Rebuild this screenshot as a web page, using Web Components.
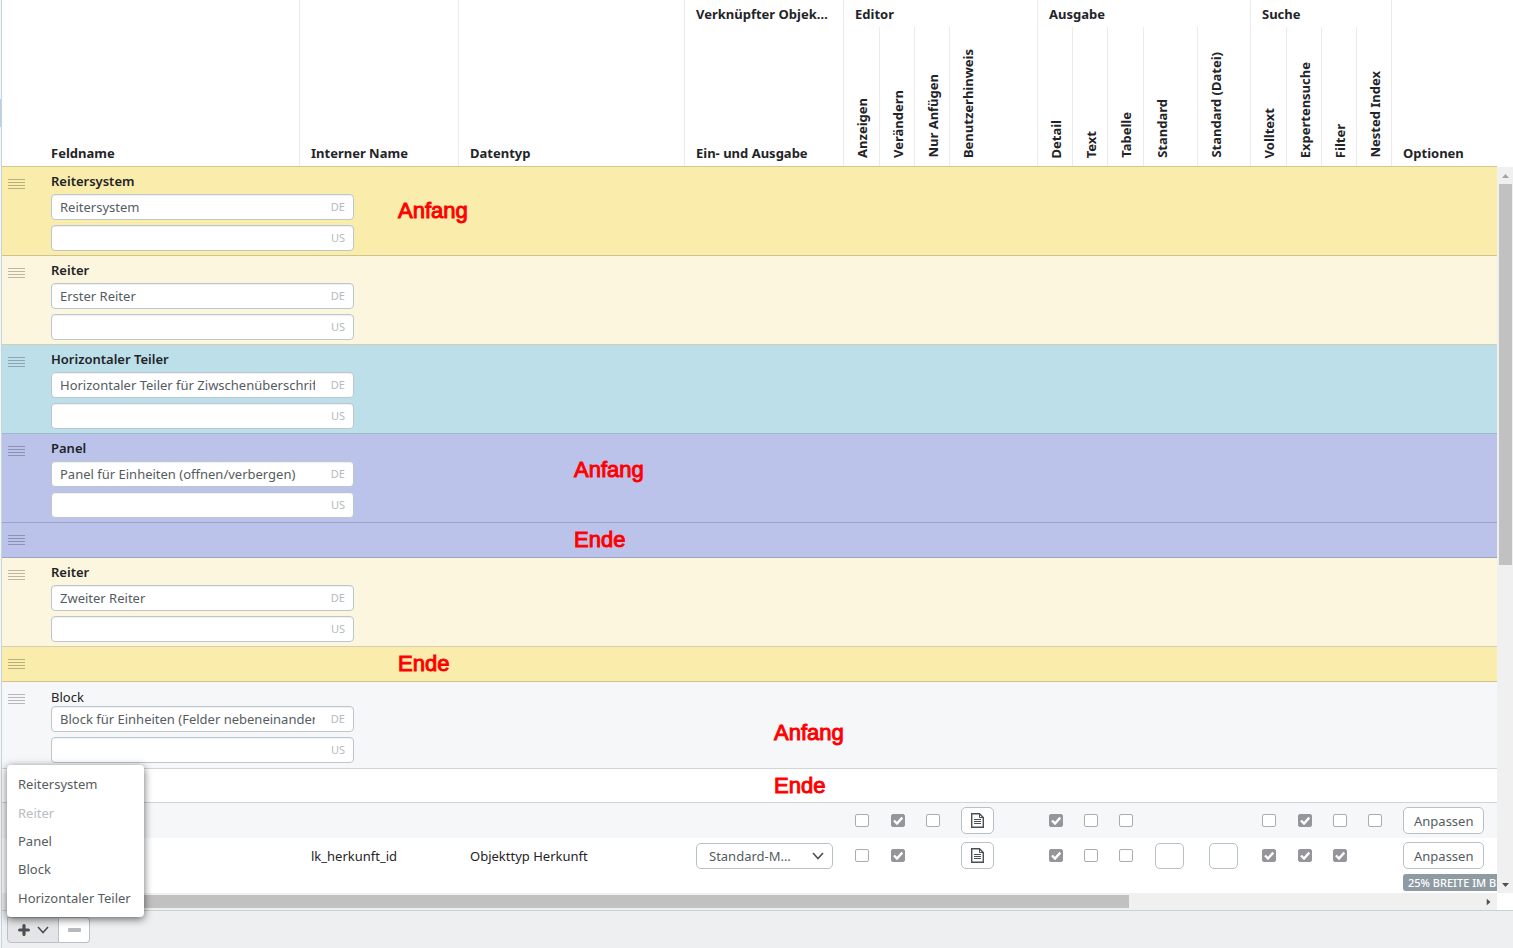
<!DOCTYPE html>
<html lang="de">
<head>
<meta charset="utf-8">
<title>Maskeneditor</title>
<style>
  body { margin: 0; background: #fff; color: #1f2428; font: 13px/20px "Noto Sans", "Open Sans", sans-serif; }
</style>
</head>
<body>
<mask-editor>
  <mask-table slot="table"></mask-table>
  <tool-bar slot="tools"></tool-bar>
</mask-editor>

<script>
const define = (name, html, setup) => {
  const template = document.createElement('template');
  template.innerHTML = html;
  customElements.define(name, class extends HTMLElement {
    constructor() {
      super();
      this.attachShadow({ mode: 'open' }).append(template.content.cloneNode(true));
    }
    connectedCallback() {
      if (setup && !this.ready) { this.ready = true; setup(this, this.shadowRoot); }
    }
  });
};

define('drag-handle', `
  <style>
    :host { display: block; width: 17px; height: 10px; color: #000; opacity: .25; }
    svg { display: block; }
  </style>
  <svg width="17" height="10" fill="currentColor" aria-hidden="true">
    <path d="M0 0h17v1H0zM0 3h17v1H0zM0 6h17v1H0zM0 9h17v1H0z"/>
  </svg>`);

/* Label with one text box for each language */
define('name-fields', `
  <style>
    :host { display: flex; flex-direction: column; color: #1f2428; }
    .title { font-weight: 600; line-height: 20px; margin-bottom: 3px; }
    :host([plain]) .title { font-weight: 400; line-height: 18px; margin-bottom: 0; }
    .field { display: flex; align-items: center; gap: 16px; box-sizing: border-box; height: 26px; padding: 0 8px;
      background: #fff; border: 1px solid #bcc6cd; border-radius: 4px; box-shadow: inset 0 1px 1px #eef1f3; }
    .field + .field { margin-top: 5px; }
    input { flex: 1; min-width: 0; border: 0; padding: 0; outline: 0; background: none; font: inherit; color: #555c61; }
    .lang { font-size: 11px; color: #b4babe; }
  </style>
  <label class="title" for="de"></label>
  <div class="field"><input id="de" type="text"><label class="lang" for="de">DE</label></div>
  <div class="field"><input id="us" type="text"><label class="lang" for="us">US</label></div>`,
  (el, root) => {
    root.querySelector('.title').textContent = el.getAttribute('label');
    root.querySelector('#de').value = el.getAttribute('value');
  });

define('tick-box', `
  <style>
    :host { display: block; height: 13px; }
    input { appearance: none; display: block; box-sizing: border-box; width: 14px; height: 13px; margin: 0;
      border: 1px solid #a9adb1; border-radius: 2px; background: #fff; }
    input:checked { border-color: #95959b; background: #95959b url("data:image/svg+xml,%3Csvg xmlns='http://www.w3.org/2000/svg' viewBox='0 0 12 11'%3E%3Cpath d='M2 5.5l3 3L10.3 2.6' fill='none' stroke='white' stroke-width='2.4'/%3E%3C/svg%3E") center / 12px 11px no-repeat; }
  </style>
  <input type="checkbox">`,
  (el, root) => {
    const box = root.querySelector('input');
    box.checked = el.hasAttribute('checked');
    box.setAttribute('aria-label', el.getAttribute('label'));
  });

define('push-button', `
  <style>
    :host { display: block; }
    button { display: flex; align-items: center; justify-content: center; box-sizing: border-box; height: 27px; padding: 0 10px;
      border: 1px solid #b7c0c6; border-radius: 5px; background: #fff; color: #555c61; font: inherit; }
    :host([label]) button { padding: 0 9px; }
  </style>
  <button type="button"><slot></slot></button>`,
  (el, root) => {
    if (el.hasAttribute('label')) root.querySelector('button').setAttribute('aria-label', el.getAttribute('label'));
  });

define('doc-icon', `
  <style>:host { display: block; } svg { display: block; }</style>
  <svg width="13" height="15" viewBox="0 0 13 15" fill="none" stroke="#4a5055" aria-hidden="true">
    <path d="M.7.7h7.800l3.800 3.800v9.800H.7z" stroke-width="1.4"/><path d="M8.5.5v4h4"/><path d="M3 6.500h7M3 8.500h7M3 10.500h7"/>
  </svg>`);

define('mask-select', `
  <style>
    :host { display: grid; align-items: center; }
    select { grid-area: 1 / 1; appearance: none; box-sizing: border-box; width: 100%; height: 26px; padding: 0 30px 0 12px;
      border: 1px solid #b7c0c6; border-radius: 5px; background: #fff; color: #555c61; font: inherit; }
    svg { grid-area: 1 / 1; justify-self: end; margin-right: 9px; pointer-events: none; }
  </style>
  <select aria-label="Ein- und Ausgabe"><option>Standard-M…</option></select>
  <svg width="12" height="8" fill="none" stroke="#4a5055" stroke-width="1.6" aria-hidden="true"><path d="M1 1l5 5.5L11 1"/></svg>`);

define('number-box', `
  <style>
    :host { display: block; }
    input { display: block; box-sizing: border-box; width: 29px; height: 26px; padding: 0 4px; border: 1px solid #b7c0c6; border-radius: 5px; font: inherit; }
  </style>
  <input type="text">`,
  (el, root) => root.querySelector('input').setAttribute('aria-label', el.getAttribute('label')));

define('scroll-bar', `
  <style>
    :host { display: grid; grid-template-rows: 17px 55fr 45fr 17px; background: #f0f0f0; padding: 0 1px 0 2px; }
    :host([horizontal]) { grid-template: none / 17px 76fr 24fr 17px; padding: 2px 0; }
    i { display: grid; place-items: center; }
    .thumb { background: #c1c1c1; }
    svg { fill: #505050; }
    .first svg { fill: #a3a3a3; }
    :host([horizontal]) svg { transform: rotate(-90deg); }
    .first svg { transform: rotate(180deg); }
    :host([horizontal]) .first svg { transform: rotate(90deg); }
  </style>
  <i class="first"><svg width="7" height="4"><path d="M0 0h7L3.500 4z"/></svg></i>
  <i class="thumb"></i><i></i>
  <i><svg width="7" height="4"><path d="M0 0h7L3.500 4z"/></svg></i>`);

const section = (kind, label, value, note = '', level = '') => `
  <tr class="section ${kind} ${label ? '' : 'end'}">
    <td class="grip"><drag-handle></drag-handle></td>
    <td>${label ? `<name-fields ${kind === 'block' ? 'plain' : ''} label="${label}" value="${value}"></name-fields>` : ''}</td>
    <td class="note ${level}">${note}</td>
  </tr>`;
const names = ['Anzeigen', 'Verändern', 'Nur Anfügen', 'Benutzerhinweis', 'Detail', 'Text', 'Tabelle', 'Standard',
  'Standard (Datei)', 'Volltext', 'Expertensuche', 'Filter', 'Nested Index'];
/* One character for each option column: 0 open, 1 ticked, d document, n number, - nothing */
const options = (codes) => [...codes].map((c, i) => '<td>' + ({
  0: `<tick-box label="${names[i]}"></tick-box>`,
  1: `<tick-box checked label="${names[i]}"></tick-box>`,
  d: `<push-button label="${names[i]}"><doc-icon></doc-icon></push-button>`,
  n: `<number-box label="${names[i]}"></number-box>`
}[c] || '') + '</td>').join('');

define('mask-table', `
  <style>
    :host { display: block; overflow: hidden;
      --columns: minmax(240px, 1fr) 159px 226px 159px 36px 35px 35px 88px 35px 35px 36px 54px 53px 36px 35px 35px 35px 105px; }
    table, tbody { display: block; }
    thead { display: grid; grid-template-columns: var(--columns); grid-template-rows: 27px 139px; border-bottom: 1px solid #cfc890; }
    thead tr { display: contents; }
    th { grid-row: 1; display: flex; align-items: flex-end; box-sizing: border-box; min-width: 0; padding: 0 0 3px 11px; border-right: 1px solid #ebebeb;
      font-weight: 700; text-align: left; white-space: nowrap; }
    .tall { grid-row: 1 / 3; }
    .tall:first-child { padding-left: 49px; }
    .editor { grid-column: 5 / 9; }
    .output { grid-column: 9 / 14; }
    .search { grid-column: 14 / 18; }
    .last { grid-column: 18; border: 0; }
    .io { grid-area: 2 / 4; }
    .turn { grid-row: 2; padding: 0 0 8px 8px; }
    .turn span { writing-mode: vertical-rl; transform: rotate(180deg); line-height: 20px; }

    td { padding: 0; }
    .section { display: grid; grid-template-columns: 49px 303px 1fr; box-sizing: border-box; height: 89px; padding-top: 4px;
      border-bottom: 1px solid var(--line); background: var(--fill); }
    .end { height: 35px; }
    .grip { padding: 8px 0 0 6px; }
    .system { --fill: #faecab; --line: #cfc48c; }
    .tab { --fill: #fdf6de; --line: #d3cfb4; }
    .divider { --fill: #bcdfea; --line: #9dbcc9; }
    .panel { --fill: #bbc3eb; --line: #9ba3c6; }
    .block { --fill: #f5f7f9; --line: #d0d4d6; }
    .block:not(.end) { height: 87px; padding-top: 6px; }
    .block .grip { padding-top: 6px; }
    .block.end { --fill: #fff; height: 34px; }
    .note { align-self: center; padding: 0 0 4px 44px; color: #f00; font: 22px/24px "Liberation Sans", Arial, sans-serif; -webkit-text-stroke: 1px #f00; }
    .inner { padding-left: 220px; }
    .deep { padding-left: 420px; }
    .panel:not(.end) .note { padding-bottom: 20px; }
    .block:not(.end) .note { padding: 10px 0 0 420px; }

    .data { display: grid; grid-template-columns: var(--columns); height: 35px; background: #fff; }
    .data.alt { background: #f5f7f9; }
    .data td { display: flex; flex-direction: column; align-items: flex-start; box-sizing: border-box; min-width: 0; padding: 4px 0 0 11px; }
    .data td.grip { padding: 12px 0 0 6px; }
    .data td:has(tick-box) { padding-top: 11px; }
    .data.full { height: 71px; }
    .data.full td.text { padding-top: 8px; }
    .data.full td:has(number-box), .data.full td:has(mask-select) { padding-top: 5px; }
    mask-select { width: 137px; }
    .badge { margin-top: 5px; padding: 0 5px; border-radius: 3px; background: #8e9ba2; color: #fff; font-size: 11px; font-weight: 500; line-height: 17px; white-space: nowrap; }
  </style>
  <table>
    <thead>
      <tr>
        <th class="tall">Feldname</th><th class="tall">Interner Name</th><th class="tall">Datentyp</th>
        <th>Verknüpfter Objek…</th><th class="editor">Editor</th><th class="output">Ausgabe</th><th class="search">Suche</th>
        <th class="tall last">Optionen</th>
      </tr>
      <tr><th class="io">Ein- und Ausgabe</th>${names.map(n => `<th class="turn"><span>${n}</span></th>`).join('')}</tr>
    </thead>
    <tbody>
      ${section('system', 'Reitersystem', 'Reitersystem', 'Anfang')}
      ${section('tab', 'Reiter', 'Erster Reiter')}
      ${section('divider', 'Horizontaler Teiler', 'Horizontaler Teiler für Ziwschenüberschriften')}
      ${section('panel', 'Panel', 'Panel für Einheiten (offnen/verbergen)', 'Anfang', 'inner')}
      ${section('panel', '', '', 'Ende', 'inner')}
      ${section('tab', 'Reiter', 'Zweiter Reiter')}
      ${section('system', '', '', 'Ende')}
      ${section('block', 'Block', 'Block für Einheiten (Felder nebeneinander)', 'Anfang', 'deep')}
      ${section('block', '', '', 'Ende', 'deep')}
      <tr class="data alt">
        <td class="grip"><drag-handle></drag-handle></td><td></td><td></td><td></td>${options('010d100--0100')}
        <td><push-button>Anpassen</push-button></td>
      </tr>
      <tr class="data full">
        <td class="grip"><drag-handle></drag-handle></td><td class="text">lk_herkunft_id</td><td class="text">Objekttyp Herkunft</td>
        <td><mask-select></mask-select></td>${options('01-d100nn111-')}
        <td><push-button>Anpassen</push-button><span class="badge">25% BREITE IM BLOCK</span></td>
      </tr>
    </tbody>
  </table>`);

define('tool-bar', `
  <style>
    :host { display: flex; padding: 6px 5px 5px; border-top: 1px solid #c9d2d7; background: #edeff1; }
    .anchor { position: relative; }
    button { font: inherit; color: #4a5055; }
    .tool { display: flex; align-items: center; justify-content: center; box-sizing: border-box; height: 26px; border: 1px solid #b7c0c6; background: #fff; }
    .add { gap: 7px; width: 52px; border-radius: 0 0 0 4px; background: #e3e5e7; }
    .remove { width: 31px; border-left: 0; border-radius: 0 4px 4px 0; }
    .menu { position: absolute; left: 0; bottom: 100%; display: flex; flex-direction: column; box-sizing: border-box; min-width: 137px; min-height: 152px;
      padding: 5px 0; border-radius: 4px; background: #fff; box-shadow: 0 2px 8px rgba(0,0,0,.6); }
    .menu button { flex: 1; padding: 0 11px; border: 0; background: none; text-align: left; white-space: nowrap; color: #555c61; }
    .menu button:disabled { color: #b7bdc1; }
  </style>
  <div class="anchor">
    <button type="button" class="tool add" aria-label="Hinzufügen" aria-haspopup="menu">
      <svg width="12" height="12" fill="none" stroke="#4a5055" stroke-width="3.200" stroke-linecap="round"><path d="M6 1.600v8.800M1.600 6h8.800"/></svg>
      <svg width="12" height="8" fill="none" stroke="#4a5055" stroke-width="1.600"><path d="M1 1l5 5.500L11 1"/></svg>
    </button>
    <div class="menu" role="menu">
      <button type="button" role="menuitem">Reitersystem</button>
      <button type="button" role="menuitem" disabled>Reiter</button>
      <button type="button" role="menuitem">Panel</button>
      <button type="button" role="menuitem">Block</button>
      <button type="button" role="menuitem">Horizontaler Teiler</button>
    </div>
  </div>
  <button type="button" class="tool remove" aria-label="Entfernen">
    <svg width="13" height="4"><rect width="13" height="4" rx="1" fill="#b4babe"/></svg>
  </button>`);

define('mask-editor', `
  <style>
    :host { display: grid; grid-template: minmax(0, 1fr) / 1px minmax(0, 1fr); height: 100vh; }
    .edge { background: linear-gradient(#b9d0ee, #b9d0ee) 0 99px / 1px 28px no-repeat #f4f6f8; }
    main { display: grid; grid-template: 167px minmax(0, 1fr) 17px auto / minmax(0, 1fr) 16px; border-left: 1px solid #c9d4da; }
    slot { display: contents; }
    ::slotted([slot=table]) { grid-area: 1 / 1 / 3 / 2; }
    ::slotted([slot=tools]) { grid-area: 4 / 1 / 5 / 3; }
    .down { grid-area: 2 / 2; }
    .across { grid-area: 3 / 1; }
  </style>
  <div class="edge"></div>
  <main>
    <slot name="table"></slot>
    <scroll-bar class="down"></scroll-bar>
    <scroll-bar class="across" horizontal></scroll-bar>
    <slot name="tools"></slot>
  </main>`);
</script>
</body>
</html>
